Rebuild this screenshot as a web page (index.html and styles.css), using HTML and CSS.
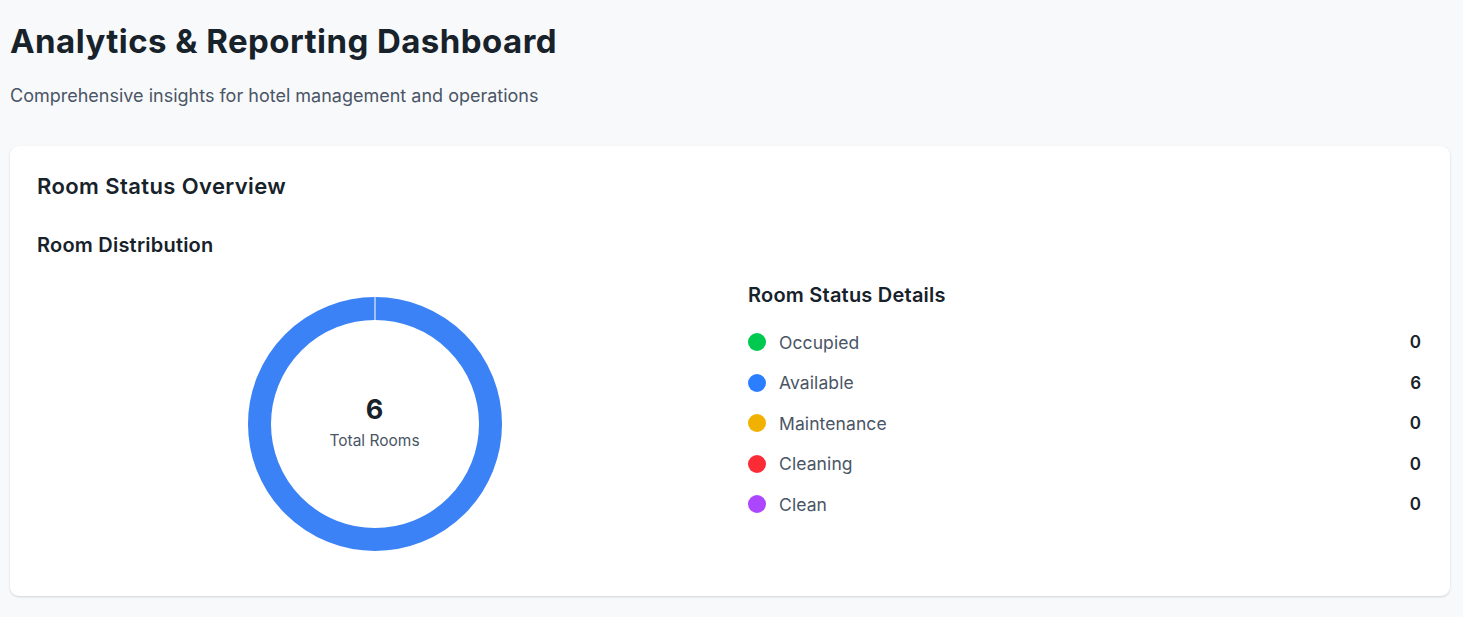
FILE: index.html
```html
<!DOCTYPE html>
<html lang="en">
<head>
<meta charset="utf-8">
<title>Analytics &amp; Reporting Dashboard</title>
<link rel="stylesheet" href="styles.css">
</head>
<body>
<main class="page">
  <header class="page-header">
    <h1 class="page-title">Analytics &amp; Reporting Dashboard</h1>
    <p class="page-subtitle">Comprehensive insights for hotel management and operations</p>
  </header>

  <section class="card">
    <h2 class="card-title">Room Status Overview</h2>
    <div class="card-grid">
      <div class="dist">
        <h3 class="section-title">Room Distribution</h3>
        <div class="chart">
          <svg class="donut" width="256" height="256" viewBox="0 0 256 256" aria-hidden="true">
            <circle cx="128" cy="128" r="115.5" fill="none" stroke="#3b82f6" stroke-width="23"/>
            <line x1="128" y1="0" x2="128" y2="25" stroke="#ffffff" stroke-width="1"/>
          </svg>
          <div class="chart-center">
            <div class="chart-value">6</div>
            <div class="chart-label">Total Rooms</div>
          </div>
        </div>
      </div>
      <div class="details">
        <h3 class="section-title">Room Status Details</h3>
        <ul class="status-list">
          <li class="status-row"><span class="dot dot-green"></span><span class="status-name">Occupied</span><span class="status-count">0</span></li>
          <li class="status-row"><span class="dot dot-blue"></span><span class="status-name">Available</span><span class="status-count">6</span></li>
          <li class="status-row"><span class="dot dot-amber"></span><span class="status-name">Maintenance</span><span class="status-count">0</span></li>
          <li class="status-row"><span class="dot dot-red"></span><span class="status-name">Cleaning</span><span class="status-count">0</span></li>
          <li class="status-row"><span class="dot dot-purple"></span><span class="status-name">Clean</span><span class="status-count">0</span></li>
        </ul>
      </div>
    </div>
  </section>
</main>
</body>
</html>
```

FILE: styles.css
```css
* { box-sizing: border-box; }

html, body {
  margin: 0;
  padding: 0;
  background: #f8f9fb;
}

body {
  font-family: Inter, "Noto Sans", "Liberation Sans", sans-serif;
  color: #1a2328;
}

.page {
  padding: 21px 13px 20px 10px;
}

.page-header {
  margin-bottom: 38px;
}

.page-title {
  margin: 0;
  font-size: 33px;
  line-height: 40px;
  font-weight: 700;
  color: #17222a;
  letter-spacing: 0.45px;
}

.page-subtitle {
  margin: 23px 0 0;
  font-size: 18px;
  line-height: 24px;
  color: #4a5565;
}

.card {
  background: #ffffff;
  border-radius: 9px;
  box-shadow: 0 1px 3px rgba(0, 0, 0, 0.1), 0 1px 2px rgba(0, 0, 0, 0.06);
  padding: 26px 27px 22px;
}

.card-title {
  margin: 0;
  font-size: 22px;
  line-height: 28px;
  font-weight: 600;
  color: #17222a;
  letter-spacing: 0.4px;
}

.card-grid {
  display: grid;
  grid-template-columns: 1fr 1fr;
  column-gap: 36px;
  margin-top: 32px;
}

.section-title {
  margin: 0;
  font-size: 20px;
  line-height: 26px;
  font-weight: 600;
  color: #17222a;
  letter-spacing: 0.22px;
}

.chart {
  position: relative;
  height: 300px;
  margin-top: 16px;
  display: flex;
  align-items: center;
  justify-content: center;
}

.donut { display: block; }

.chart-center {
  position: absolute;
  inset: 0;
  display: flex;
  flex-direction: column;
  align-items: center;
  justify-content: center;
}

.chart-value {
  font-size: 27px;
  line-height: 30px;
  font-weight: 700;
  color: #17222a;
}

.chart-label {
  margin-top: 4px;
  font-size: 15.5px;
  line-height: 24px;
  color: #4a5565;
}

.details {
  padding-top: 50px;
}

.status-list {
  list-style: none;
  margin: 22px 0 0;
  padding: 0;
  display: flex;
  flex-direction: column;
  gap: 16.5px;
}

.status-row {
  display: flex;
  align-items: center;
  height: 24px;
}

.dot {
  width: 18px;
  height: 18px;
  border-radius: 50%;
  flex: none;
  margin-right: 13px;
}

.dot-green { background: #00c950; }
.dot-blue { background: #2b7fff; }
.dot-amber { background: #f0b100; }
.dot-red { background: #fb2c36; }
.dot-purple { background: #ad46ff; }

.status-name {
  flex: 1;
  font-size: 17.5px;
  letter-spacing: 0.1px;
  color: #4a5565;
}

.status-count {
  font-size: 17px;
  font-weight: 600;
  color: #17222a;
  padding-right: 2px;
}
```
